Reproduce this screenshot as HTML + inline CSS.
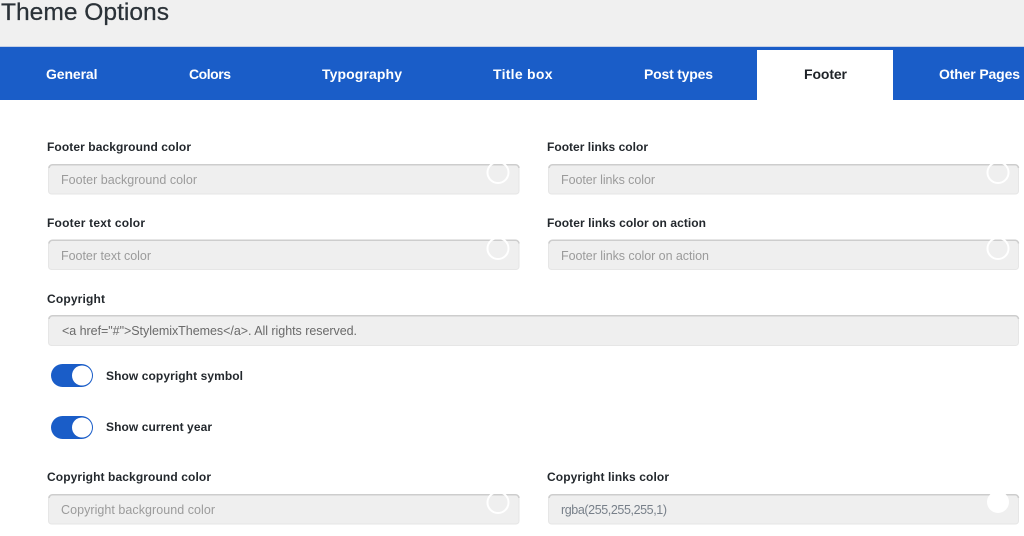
<!DOCTYPE html>
<html lang="en">
<head>
<meta charset="utf-8">
<title>Theme Options</title>
<style>
html,body{margin:0;padding:0;background:#fff;width:1024px;height:536px;overflow:hidden}
svg{display:block}
text{font-family:"Liberation Sans",Arial,sans-serif}
.t{font-size:14px;font-weight:700;fill:#fff}
.l{font-size:12px;font-weight:700;fill:#23282d}
.p{font-size:12.5px;fill:#9b9b9b}
.v{font-size:12.5px;fill:#6a6a6a}
.f{fill:#efefef;stroke:#e6e6e6;stroke-width:1}
.e{fill:none;stroke:#cdcdcd;stroke-width:1.5}
.c{fill:none;stroke:#fff;stroke-width:2}
</style>
</head>
<body>
<svg width="1024" height="536" viewBox="0 0 1024 536" xmlns="http://www.w3.org/2000/svg">
<rect width="1024" height="536" fill="#fff"/>
<rect width="1024" height="46.5" fill="#f0f0f0"/>
<rect y="46" width="1024" height="1" fill="#c5d0e6"/>
<text x="1" y="20" font-size="24.500" fill="#2b3238" stroke="#2b3238" stroke-width="0.25" textLength="168" lengthAdjust="spacingAndGlyphs">Theme Options</text>

<rect y="47" width="1024" height="53" fill="#1a5dc8"/>
<rect x="757" y="50" width="136" height="50" fill="#fff"/>
<text class="t" x="46" y="79" textLength="51.5">General</text>
<text class="t" x="189" y="79" textLength="42">Colors</text>
<text class="t" x="322" y="79" textLength="80">Typography</text>
<text class="t" x="493" y="79" textLength="59.5">Title box</text>
<text class="t" x="644" y="79" textLength="69">Post types</text>
<text class="t" x="804" y="79" textLength="43" style="fill:#1f2328">Footer</text>
<text class="t" x="939" y="79" textLength="81">Other Pages</text>

<text class="l" x="47" y="151" textLength="144">Footer background color</text>
<text class="l" x="547" y="151" textLength="101">Footer links color</text>
<rect class="f" x="48.5" y="165" width="470.500" height="29" rx="3"/>
<path class="e" d="M49 168a3.500 3.500 0 0 1 3.500-3.200H515.500a3.500 3.500 0 0 1 3.500 3.200"/>
<rect class="f" x="548.500" y="165" width="470" height="29" rx="3"/>
<path class="e" d="M549 168a3.500 3.500 0 0 1 3.500-3.200H1015a3.500 3.500 0 0 1 3.500 3.200"/>
<text class="p" x="61" y="184" textLength="136">Footer background color</text>
<text class="p" x="561" y="184" textLength="94">Footer links color</text>
<circle class="c" cx="498" cy="172.500" r="10.500"/>
<circle class="c" cx="998" cy="172.500" r="10.500"/>

<text class="l" x="47" y="227" textLength="98">Footer text color</text>
<text class="l" x="547" y="227" textLength="159">Footer links color on action</text>
<rect class="f" x="48.5" y="240.500" width="470.500" height="29" rx="3"/>
<path class="e" d="M49 243.500a3.500 3.500 0 0 1 3.500-3.200H515.500a3.500 3.500 0 0 1 3.500 3.200"/>
<rect class="f" x="548.500" y="240.500" width="470" height="29" rx="3"/>
<path class="e" d="M549 243.500a3.500 3.500 0 0 1 3.500-3.200H1015a3.500 3.500 0 0 1 3.500 3.200"/>
<text class="p" x="61" y="260" textLength="90">Footer text color</text>
<text class="p" x="561" y="260" textLength="148">Footer links color on action</text>
<circle class="c" cx="498" cy="248.500" r="10.500"/>
<circle class="c" cx="998" cy="248.500" r="10.500"/>

<text class="l" x="47" y="303" textLength="58">Copyright</text>
<rect class="f" x="48.5" y="316" width="970" height="29.500" rx="3"/>
<path class="e" d="M49 319a3.500 3.500 0 0 1 3.500-3.200H1015a3.500 3.500 0 0 1 3.500 3.200"/>
<text class="v" x="62" y="335" textLength="295">&lt;a href="#"&gt;StylemixThemes&lt;/a&gt;. All rights reserved.</text>

<rect x="51" y="364" width="42" height="23" rx="11.500" fill="#1a5dc8"/>
<circle cx="82" cy="375.500" r="10" fill="#fff"/>
<text class="l" x="106" y="380" textLength="137">Show copyright symbol</text>
<rect x="51" y="416" width="42" height="23" rx="11.500" fill="#1a5dc8"/>
<circle cx="82" cy="427.500" r="10" fill="#fff"/>
<text class="l" x="106" y="431" textLength="106">Show current year</text>

<text class="l" x="47" y="481" textLength="164">Copyright background color</text>
<text class="l" x="547" y="481" textLength="122">Copyright links color</text>
<rect class="f" x="48.5" y="495" width="470.500" height="29" rx="3"/>
<path class="e" d="M49 498a3.500 3.500 0 0 1 3.500-3.200H515.500a3.500 3.500 0 0 1 3.500 3.200"/>
<rect class="f" x="548.500" y="495" width="470" height="29" rx="3"/>
<path class="e" d="M549 498a3.500 3.500 0 0 1 3.500-3.200H1015a3.500 3.500 0 0 1 3.500 3.200"/>
<text class="p" x="61" y="514" textLength="154">Copyright background color</text>
<text class="v" x="561" y="514" textLength="106" style="fill:#78808a">rgba(255,255,255,1)</text>
<circle class="c" cx="498" cy="502.500" r="10.500"/>
<circle cx="998" cy="502" r="11" fill="#fff"/>
</svg>
</body>
</html>
